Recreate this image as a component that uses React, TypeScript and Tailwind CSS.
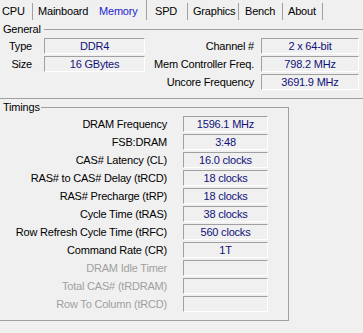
import * as React from 'react';

const tabs = [
  { label: 'CPU', cls: 'mt-[3px] h-[17px] w-[33px] pl-[2px] border-r' },
  { label: 'Mainboard', cls: 'mt-[3px] h-[17px] w-[60px] pl-[5px]' },
  { label: 'Memory', cls: 'h-[20px] w-[54px] pl-[6px] pt-[3px] border-r text-[#2424d0]' },
  { label: 'SPD', cls: 'mt-[3px] h-[17px] w-[41px] pl-[8px] border-r' },
  { label: 'Graphics', cls: 'mt-[3px] h-[17px] w-[51px] pl-[5px] border-r' },
  { label: 'Bench', cls: 'mt-[3px] h-[17px] w-[44px] pl-[6px] border-r' },
  { label: 'About', cls: 'mt-[3px] h-[17px] w-[40px] pl-[5px] border-r' },
];

const timings: { label: string; value: string; off?: boolean }[] = [
  { label: 'DRAM Frequency', value: '1596.1 MHz' },
  { label: 'FSB:DRAM', value: '3:48' },
  { label: 'CAS# Latency (CL)', value: '16.0 clocks' },
  { label: 'RAS# to CAS# Delay (tRCD)', value: '18 clocks' },
  { label: 'RAS# Precharge (tRP)', value: '18 clocks' },
  { label: 'Cycle Time (tRAS)', value: '38 clocks' },
  { label: 'Row Refresh Cycle Time (tRFC)', value: '560 clocks' },
  { label: 'Command Rate (CR)', value: '1T' },
  { label: 'DRAM Idle Timer', value: '', off: true },
  { label: 'Total CAS# (tRDRAM)', value: '', off: true },
  { label: 'Row To Column (tRCD)', value: '', off: true },
];

// sunken read-only field, like the win32 edit boxes
function Field({ value, className }: { value: string; className: string }) {
  return (
    <div
      className={
        'flex h-[16px] items-center justify-center border border-t-[#a0a0a0] border-l-[#a0a0a0] border-r-white border-b-white text-[#10107a] ' +
        className
      }
    >
      {value}
    </div>
  );
}

export default function App() {
  return (
    <div className="h-[333px] w-[363px] overflow-hidden bg-[#f0f0f0] font-['Liberation_Sans',Arial,sans-serif] text-[11px] leading-[11px] tracking-[-0.2px] text-black">
      <div className="flex h-[20px]">
        {tabs.map((t) => (
          <div key={t.label} className={'flex items-center border-[#a0a0a0] ' + t.cls}>
            {t.label}
          </div>
        ))}
      </div>

      <fieldset className="mt-[4px] border-t border-b border-[#a0a0a0] pb-[8px]">
        <legend className="pl-[3px] pr-[3px]">General</legend>
        <div className="mt-[3px] flex flex-col gap-[2px]">
          <div className="flex items-center">
            <div className="w-[32px] text-right">Type</div>
            <Field value="DDR4" className="ml-[12px] w-[101px]" />
            <div className="w-[109px] text-right">Channel #</div>
            <Field value="2 x 64-bit" className="ml-[7px] w-[98px]" />
          </div>
          <div className="flex items-center">
            <div className="w-[32px] text-right">Size</div>
            <Field value="16 GBytes" className="ml-[12px] w-[101px]" />
            <div className="w-[109px] text-right">Mem Controller Freq.</div>
            <Field value="798.2 MHz" className="ml-[7px] w-[98px]" />
          </div>
          <div className="flex items-center">
            <div className="w-[254px] text-right">Uncore Frequency</div>
            <Field value="3691.9 MHz" className="ml-[7px] w-[98px]" />
          </div>
        </div>
      </fieldset>

      <fieldset className="mt-[3px] w-[289px] border-t border-r border-b border-[#a0a0a0] pb-[8px]">
        <legend className="pl-[3px] pr-[1px]">Timings</legend>
        <div className="mt-[3px] flex flex-col gap-[2px]">
          {timings.map((r) => (
            <div key={r.label} className="flex items-center">
              <div className={'w-[167px] text-right ' + (r.off ? 'text-[#a0a0a0]' : '')}>{r.label}</div>
              <Field value={r.value} className="ml-[16px] w-[85px]" />
            </div>
          ))}
        </div>
      </fieldset>
    </div>
  );
}
